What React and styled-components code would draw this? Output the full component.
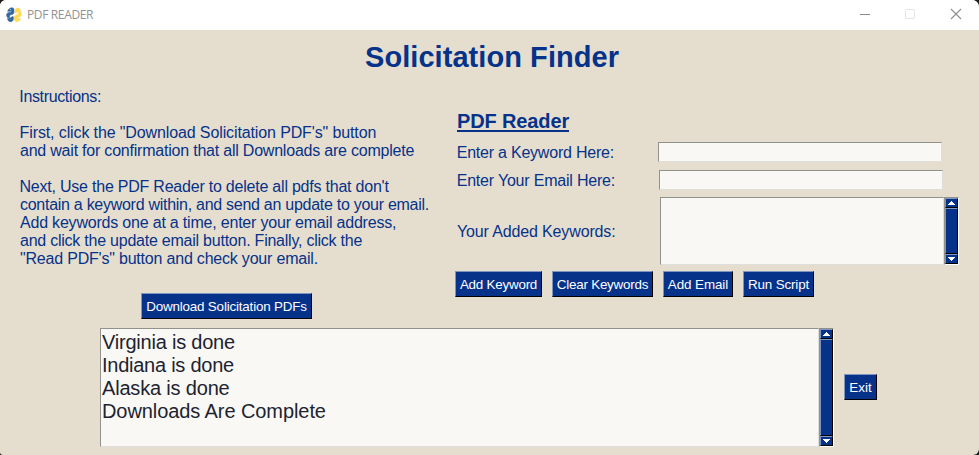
import React from 'react';
import styled, { createGlobalStyle } from 'styled-components';

const NAVY = '#063289';
const SAND = '#e5dece';
const PAPER = '#f9f8f4';

const Global = createGlobalStyle`
  * { box-sizing: border-box; }
  body { margin: 0; background: #1c1c1c; overflow: hidden; }
  button { appearance: none; margin: 0; }
`;

const Window = styled.main`
  width: 979px;
  height: 455px;
  display: flex;
  flex-direction: column;
  overflow: hidden;
  border-radius: 6px 7px 6px 3px;
  background: ${SAND};
  color: ${NAVY};
  font-family: 'Liberation Sans', Arial, sans-serif;
`;

const TitleBar = styled.header`
  height: 30px;
  flex: none;
  display: flex;
  align-items: center;
  padding: 0 17px 0 6px;
  background: #fff;
`;

const WindowName = styled.span`
  flex: 1;
  margin-left: 5px;
  padding-bottom: 1px;
  font: 12px/16px 'Open Sans', sans-serif;
  letter-spacing: -0.36px;
  color: #929292;
`;

const WindowControls = styled.div`
  display: flex;
  gap: 34px;
  margin-bottom: 2px;
`;

const Heading = styled.h1`
  height: 55px;
  margin: 0;
  padding: 11px 0 0 365px;
  font-size: 29px;
  line-height: 33px;
  letter-spacing: 0.06px;
`;

const Columns = styled.section`
  height: 235px;
  flex: none;
  display: grid;
  grid-template-columns: 455px 524px;
`;

const Instructions = styled.div`
  padding: 3px 0 0 19px;
`;

const TextLine = styled.p`
  margin: 0;
  height: 18px;
  font-size: 16px;
  line-height: 18px;
  white-space: pre;
  padding-left: ${(p) => p.$indent || 0}px;
  letter-spacing: ${(p) => p.$track || 0}px;
`;

const Button = styled.button`
  width: ${(p) => p.$w}px;
  height: 26px;
  padding: 1px 0 0;
  border: 1px solid;
  border-color: #7e95c0 #000 #000 #7e95c0;
  border-radius: 0;
  background: ${NAVY};
  color: #fff;
  font: 13.4px/23px 'Liberation Sans', Arial, sans-serif;
  letter-spacing: ${(p) => p.$track || 0}px;
  white-space: nowrap;
`;

const DownloadRow = styled.div`
  padding: 25px 0 0 122px;
  display: flex;
`;

const Reader = styled.div`
  display: flex;
  flex-direction: column;
`;

const ReaderTitle = styled.h2`
  align-self: flex-start;
  width: 112px;
  height: 22px;
  margin: 25px 0 10px 2px;
  border-bottom: 2px solid ${NAVY};
  font-size: 20px;
  line-height: 23px;
  letter-spacing: -0.13px;
  white-space: nowrap;
`;

const Field = styled.label`
  display: flex;
  align-items: center;
  height: ${(p) => p.$h}px;
  margin-bottom: ${(p) => p.$gap}px;
`;

const Label = styled(TextLine).attrs({ as: 'span' })`
  width: ${(p) => p.$w}px;
  height: 20px;
  padding-top: 2px;
`;

const sunken = `
  border: 1px solid;
  border-color: #92928c #dedfdb #dedfdb #92928c;
  border-radius: 0;
  background: ${PAPER};
`;

const Input = styled.input`
  ${sunken}
  width: 284px;
  height: 20px;
  margin: 0;
  padding: 0 2px;
  outline: none;
`;

const ListBox = styled.div`
  ${sunken}
  width: ${(p) => p.$w}px;
  height: 100%;
  padding: 2px 0 0 1px;
  color: #1d2330;
`;

const ListItem = styled.div`
  height: 23px;
  font-size: 20px;
  line-height: 23px;
  white-space: nowrap;
  letter-spacing: ${(p) => p.$track}px;
`;

const Track = styled.div`
  width: 15px;
  height: 100%;
  flex: none;
  display: flex;
  flex-direction: column;
  border: 1px solid;
  border-color: #92928c #fff #fff #92928c;
`;

const Piece = styled.div`
  display: flex;
  justify-content: center;
  align-items: center;
  flex: ${(p) => (p.$grow ? '1' : '0 0 10px')};
  border: 1px solid;
  border-color: #7e95c0 #000 #000 #7e95c0;
  background: ${NAVY};
`;

const ButtonRow = styled.div`
  display: flex;
  gap: 10px;
`;

const Output = styled.section`
  display: flex;
  align-items: center;
  height: 119px;
  margin: 8px 0 0 100px;
`;

const ExitSlot = styled.div`
  display: flex;
  margin-left: 10px;
  padding-bottom: 1px;
`;

function Logo() {
  return (
    <svg width="16" height="16" viewBox="0 0 16 16">
      <g fill="#32699c" stroke="#32699c" strokeWidth=".5">
        <path d="M3.2 1.8Q4.5.4 6.5.8Q8.2 1.2 8 3.3V5.5Q7.9 7.2 6.2 7.4L4.6 7.8Q3.5 8.2 3.6 9.8V11.2Q1.1 11 .6 9.1Q.2 7 1.7 5.8L5.5 5.1V4.3H1.6Q2 2.7 3.2 1.8Z" />
        <path d="M1.3 11.5Q3.4 12 5 10.5Q6.3 9 7.4 9.8Q8 11 7.1 13.2Q6 15.2 4 14.7Q1.8 14.1 1.3 11.5Z" />
      </g>
      <g fill="#ffd94f" stroke="#ffd94f" strokeWidth=".5">
        <path d="M9 3.4Q9.4 1.3 11.3 1Q13.8.8 14.4 3.2V4.1Q12.4 3.8 11.2 5.2Q9.8 6.6 9 5.8Z" />
        <path d="M12.6 4.6H14.6Q15.8 6.2 15.2 8.2Q14.6 9.8 12.8 10.1L10.7 10.7V11.6H14.6Q14.2 14 12.2 14.6Q9 15 8.3 12.8V10.2Q8.5 8.2 10.1 8L11.6 7.6Q12.8 7.2 12.6 4.6Z" />
      </g>
      <circle cx="4.3" cy="2.6" r=".5" fill="#fff" />
      <circle cx="11.9" cy="13.1" r=".5" fill="#fff" />
    </svg>
  );
}

function ScrollBar() {
  return (
    <Track>
      <Piece>
        <svg width="7" height="4" viewBox="0 0 7 4" shapeRendering="crispEdges">
          <path d="M3 0h1v1h1v1h1v1h1v1H0V3h1V2h1V1h1z" fill="#fff" />
        </svg>
      </Piece>
      <Piece $grow />
      <Piece>
        <svg width="7" height="4" viewBox="0 0 7 4" shapeRendering="crispEdges">
          <path d="M0 0h7v1H6v1H5v1H4v1H3V3H2V2H1V1H0z" fill="#fff" />
        </svg>
      </Piece>
    </Track>
  );
}

const LINES = [
  ['Instructions:', -0.35, 0.3],
  ['', 0, 0],
  ['First, click the "Download Solicitation PDF\'s" button', -0.12, 0.6],
  ['and wait for confirmation that all Downloads are complete', -0.215, 1],
  ['', 0, 0],
  ["Next, Use the PDF Reader to delete all pdfs that don't", -0.22, 0.5],
  ['contain a keyword within, and send an update to your email.', -0.275, 1],
  ['Add keywords one at a time, enter your email address,', -0.2, 1],
  ['and click the update email button. Finally, click the', -0.235, 1],
  ['"Read PDF\'s" button and check your email.', -0.2, 1],
];

const MESSAGES = [
  ['Virginia is done', -0.22],
  ['Indiana is done', -0.25],
  ['Alaska is done', -0.18],
  ['Downloads Are Complete', -0.08],
];

export default function App() {
  return (
    <>
      <Global />
      <Window>
        <TitleBar>
          <Logo />
          <WindowName>PDF READER</WindowName>
          <WindowControls>
            <svg width="12" height="12" viewBox="0 0 12 12">
              <path d="M2 6.5h10" stroke="#8e8e8e" />
            </svg>
            <svg width="12" height="12" viewBox="0 0 12 12" fill="none">
              <rect x="1.5" y="1.5" width="9" height="9" rx=".7" stroke="#e3e3e3" />
            </svg>
            <svg width="12" height="12" viewBox="0 0 12 12">
              <path d="M1 1l10 10M11 1L1 11" stroke="#8e8e8e" strokeWidth="1.1" />
            </svg>
          </WindowControls>
        </TitleBar>
        <Heading>Solicitation Finder</Heading>
        <Columns>
          <Instructions>
            {LINES.map(([text, track, indent], i) => (
              <TextLine key={i} $track={track} $indent={indent}>{text}</TextLine>
            ))}
            <DownloadRow>
              <Button $w={171} $track={-0.18}>Download Solicitation PDFs</Button>
            </DownloadRow>
          </Instructions>
          <Reader>
            <ReaderTitle>PDF Reader</ReaderTitle>
            <Field $h={20} $gap={8}>
              <Label $w={203} $indent={1.7} $track={-0.22}>Enter a Keyword Here:</Label>
              <Input />
            </Field>
            <Field $h={20} $gap={7}>
              <Label $w={204} $indent={1.7} $track={-0.2}>Enter Your Email Here:</Label>
              <Input />
            </Field>
            <Field as="div" $h={68} $gap={6}>
              <Label $w={205} $indent={2} $track={-0.14}>Your Added Keywords:</Label>
              <ListBox $w={284} />
              <ScrollBar />
            </Field>
            <ButtonRow>
              <Button $w={87} $track={-0.22}>Add Keyword</Button>
              <Button $w={101} $track={-0.22}>Clear Keywords</Button>
              <Button $w={70} $track={-0.08}>Add Email</Button>
              <Button $w={71} $track={-0.14}>Run Script</Button>
            </ButtonRow>
          </Reader>
        </Columns>
        <Output>
          <ListBox $w={719}>
            {MESSAGES.map(([text, track]) => (
              <ListItem key={text} $track={track}>{text}</ListItem>
            ))}
          </ListBox>
          <ScrollBar />
          <ExitSlot>
            <Button $w={33} $track={0.1}>Exit</Button>
          </ExitSlot>
        </Output>
      </Window>
    </>
  );
}
